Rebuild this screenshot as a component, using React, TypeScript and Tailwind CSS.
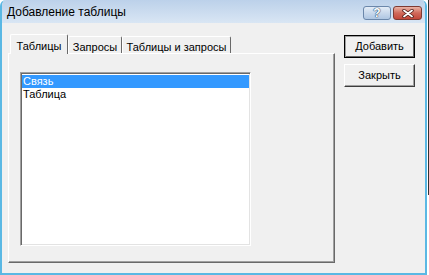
import React from 'react';

const tabs = [
  { label: 'Таблицы', width: 'w-[58px]', active: true },
  { label: 'Запросы', width: 'w-[54px]', active: false },
  { label: 'Таблицы и запросы', width: 'w-[109px]', active: false },
];

const items = ['Связь', 'Таблица'];

export default function App() {
  return (
    <div className="w-[429px] h-[275px] bg-white flex overflow-hidden font-['Liberation_Sans',Arial,sans-serif] text-black">
      <div className="w-[427px] h-[275px] flex flex-col rounded-t-[6px] border-l-2 border-r-2 border-b-2 border-[#5ab8e4] bg-[#f0f0f0] overflow-hidden">
        {/* Title bar */}
        <div className="h-[23px] flex items-center bg-gradient-to-b from-[#bcd1ea] to-[#d9e6f4] pl-[5px] pr-[3px]">
          <span className="text-[12px] leading-none pt-[1px] text-black">Добавление таблицы</span>
          <div className="ml-auto flex gap-[2px] self-start mt-[6px]">
            <button className="w-[28px] h-[14px] rounded-[3px] border border-[#6b87aa] bg-gradient-to-b from-[#e4edf7] via-[#c9d9ec] to-[#aec6e2] flex items-center justify-center">
              <span className="text-[12px] font-bold leading-none text-white [text-shadow:0_0_1px_#2a4a70,0_0_1px_#2a4a70,0_0_1px_#2a4a70]">?</span>
            </button>
            <button className="w-[29px] h-[14px] rounded-[3px] border border-[#7e3a32] bg-gradient-to-b from-[#e9b3a6] via-[#d0695a] to-[#c4473a] flex items-center justify-center">
              <svg width="12" height="9" viewBox="0 0 12 9">
                <path d="M2 1.5 L10 7.5 M10 1.5 L2 7.5" stroke="#4a1a16" strokeWidth="3.4" strokeLinecap="round" />
                <path d="M2 1.5 L10 7.5 M10 1.5 L2 7.5" stroke="#ffffff" strokeWidth="1.8" strokeLinecap="round" />
              </svg>
            </button>
          </div>
        </div>

        {/* Client area */}
        <div className="flex-1 flex pt-[11px] pl-[6px] text-[11px]">
          <div className="w-[327px] flex flex-col">
            <div className="h-[19px] flex items-end pl-[2px]">
              {tabs.map((t) =>
                t.active ? (
                  <div
                    key={t.label}
                    className={`${t.width} h-[20px] -mb-px relative z-10 bg-[#f0f0f0] border-t border-l border-white border-r border-r-[#696969] rounded-t-[2px] flex items-start justify-center pt-[3px]`}
                  >
                    {t.label}
                  </div>
                ) : (
                  <div
                    key={t.label}
                    className={`${t.width} h-[17px] bg-[#f0f0f0] border-t border-l border-white border-r border-r-[#696969] rounded-t-[2px] flex items-start justify-center pt-[2px]`}
                  >
                    {t.label}
                  </div>
                )
              )}
            </div>
            <div className="h-[210px] border-t border-l border-white border-r border-b border-r-[#696969] border-b-[#696969] shadow-[inset_-1px_-1px_0_#a0a0a0] pl-[11px] pt-[18px]">
              <div className="w-[231px] h-[174px] bg-white border border-t-[#a0a0a0] border-l-[#a0a0a0] border-r-white border-b-white shadow-[inset_1px_1px_0_#696969,inset_-1px_-1px_0_#e3e3e3] pt-[2px] pl-[1px] pr-[1px]">
                {items.map((it, i) => (
                  <div
                    key={it}
                    className={`h-[13px] leading-[13px] pl-[1px] ${i === 0 ? 'bg-[#3399ff] text-white' : ''}`}
                  >
                    {it}
                  </div>
                ))}
              </div>
            </div>
          </div>

          <div className="ml-[9px] mt-[1px] flex flex-col gap-[6px]">
            <button className="w-[71px] h-[23px] bg-[#f0f0f0] border border-black shadow-[inset_1px_1px_0_#a0a0a0,inset_-1px_-1px_0_#696969] flex items-center justify-center text-[11px]">
              Добавить
            </button>
            <button className="w-[71px] h-[23px] bg-[#f0f0f0] border-t border-l border-white border-r border-b border-r-[#3c3c3c] border-b-[#3c3c3c] shadow-[inset_-1px_-1px_0_#a0a0a0] flex items-center justify-center text-[11px]">
              Закрыть
            </button>
          </div>
        </div>
      </div>
      <div className="w-[2px] h-[195px] border-r border-[#333333]" />
    </div>
  );
}
